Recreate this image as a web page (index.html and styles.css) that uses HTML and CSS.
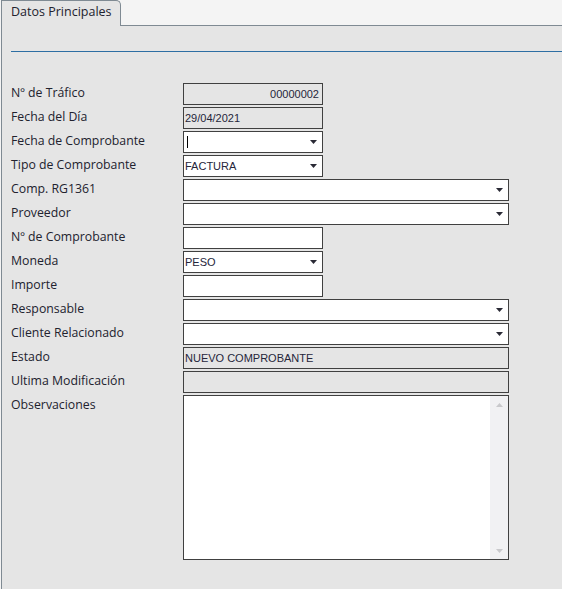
FILE: index.html
```html
<!DOCTYPE html>
<html lang="es">
<head>
<meta charset="utf-8">
<title>Datos Principales</title>
<link rel="stylesheet" href="styles.css">
</head>
<body>
<div class="tabs">
  <div class="tab">Datos Principales</div>
</div>
<div class="panel">
  <div class="rule"></div>
  <div class="form">
    <div class="label">Nº de Tráfico</div>
    <div class="field narrow readonly right">00000002</div>

    <div class="label">Fecha del Día</div>
    <div class="field narrow readonly">29/04/2021</div>

    <div class="label">Fecha de Comprobante</div>
    <div class="field narrow select"><span class="value"><span class="caret"></span></span><svg class="arrow" width="7" height="4" viewBox="0 0 7 4"><path d="M0 0H7L3.5 4Z" fill="#2a2a35"/></svg></div>

    <div class="label">Tipo de Comprobante</div>
    <div class="field narrow select"><span class="value">FACTURA</span><svg class="arrow" width="7" height="4" viewBox="0 0 7 4"><path d="M0 0H7L3.5 4Z" fill="#2a2a35"/></svg></div>

    <div class="label">Comp. RG1361</div>
    <div class="field wide select"><span class="value"></span><svg class="arrow" width="7" height="4" viewBox="0 0 7 4"><path d="M0 0H7L3.5 4Z" fill="#2a2a35"/></svg></div>

    <div class="label">Proveedor</div>
    <div class="field wide select"><span class="value"></span><svg class="arrow" width="7" height="4" viewBox="0 0 7 4"><path d="M0 0H7L3.5 4Z" fill="#2a2a35"/></svg></div>

    <div class="label">Nº de Comprobante</div>
    <div class="field narrow"></div>

    <div class="label">Moneda</div>
    <div class="field narrow select"><span class="value">PESO</span><svg class="arrow" width="7" height="4" viewBox="0 0 7 4"><path d="M0 0H7L3.5 4Z" fill="#2a2a35"/></svg></div>

    <div class="label">Importe</div>
    <div class="field narrow"></div>

    <div class="label">Responsable</div>
    <div class="field wide select"><span class="value"></span><svg class="arrow" width="7" height="4" viewBox="0 0 7 4"><path d="M0 0H7L3.5 4Z" fill="#2a2a35"/></svg></div>

    <div class="label">Cliente Relacionado</div>
    <div class="field wide select"><span class="value"></span><svg class="arrow" width="7" height="4" viewBox="0 0 7 4"><path d="M0 0H7L3.5 4Z" fill="#2a2a35"/></svg></div>

    <div class="label">Estado</div>
    <div class="field wide readonly">NUEVO COMPROBANTE</div>

    <div class="label">Ultima Modificación</div>
    <div class="field wide readonly"></div>

    <div class="label">Observaciones</div>
    <div class="field wide textarea">
      <div class="text"></div>
      <div class="scrollbar">
        <svg width="7" height="4" viewBox="0 0 7 4"><path d="M0 4H7L3.5 0Z" fill="#c9c9cc"/></svg>
        <svg width="7" height="4" viewBox="0 0 7 4"><path d="M0 0H7L3.5 4Z" fill="#c9c9cc"/></svg>
      </div>
    </div>
  </div>
</div>
</body>
</html>
```
FILE: styles.css
```css
html, body {
  margin: 0;
  padding: 0;
  height: 100%;
}
body {
  background: #f4f4f4;
  font-family: "Open Sans", "Noto Sans", sans-serif;
  color: #22222e;
  display: flex;
  flex-direction: column;
}
.tabs {
  height: 25px;
  display: flex;
  align-items: flex-end;
  padding-left: 1px;
}
.tab {
  position: relative;
  z-index: 1;
  box-sizing: border-box;
  width: 120px;
  height: 26px;
  margin-bottom: -1px;
  background: #e5e5e5;
  border: 1px solid #7f8a93;
  border-bottom: none;
  border-top-right-radius: 5px;
  padding: 2px 0 0 9px;
  font-size: 12.5px;
  line-height: 17px;
}
.panel {
  flex: 1;
  margin-left: 1px;
  background: #e5e5e5;
  border-top: 1px solid #7f8a93;
  border-left: 1px solid #7f8a93;
}
.rule {
  margin: 25px 0 0 9px;
  height: 1px;
  background: #2d6ea3;
}
.form {
  margin-top: 31px;
  padding-left: 9px;
  display: grid;
  grid-template-columns: 172px auto;
  grid-auto-rows: 22px;
  row-gap: 2px;
  align-items: start;
}
.label {
  padding-top: 2px;
  font-size: 12.3px;
  line-height: 16px;
  white-space: nowrap;
}
.field {
  box-sizing: border-box;
  height: 22px;
  border: 1px solid #404040;
  background: #fff;
  font-family: "Liberation Sans", Arial, sans-serif;
  font-size: 11px;
  color: #25253a;
  display: flex;
  align-items: center;
  padding: 0 3px 0 1px;
}
.narrow { width: 140px; }
.wide { width: 326px; }
.readonly { background: #e5e5e5; }
.right { justify-content: flex-end; }
.select { padding-right: 4px; }
.select .value {
  flex: 1;
  display: flex;
  align-items: center;
}
.select .arrow { margin-right: 1px; }
.caret {
  display: inline-block;
  width: 1px;
  height: 12px;
  margin-left: 2px;
  background: #000;
}
.textarea {
  height: 165px;
  padding: 0;
  align-items: stretch;
}
.textarea .text { flex: 1; }
.scrollbar {
  width: 18px;
  background: #f1f1f3;
  display: flex;
  flex-direction: column;
  justify-content: space-between;
  align-items: center;
  padding: 7px 0 6px;
}
```
